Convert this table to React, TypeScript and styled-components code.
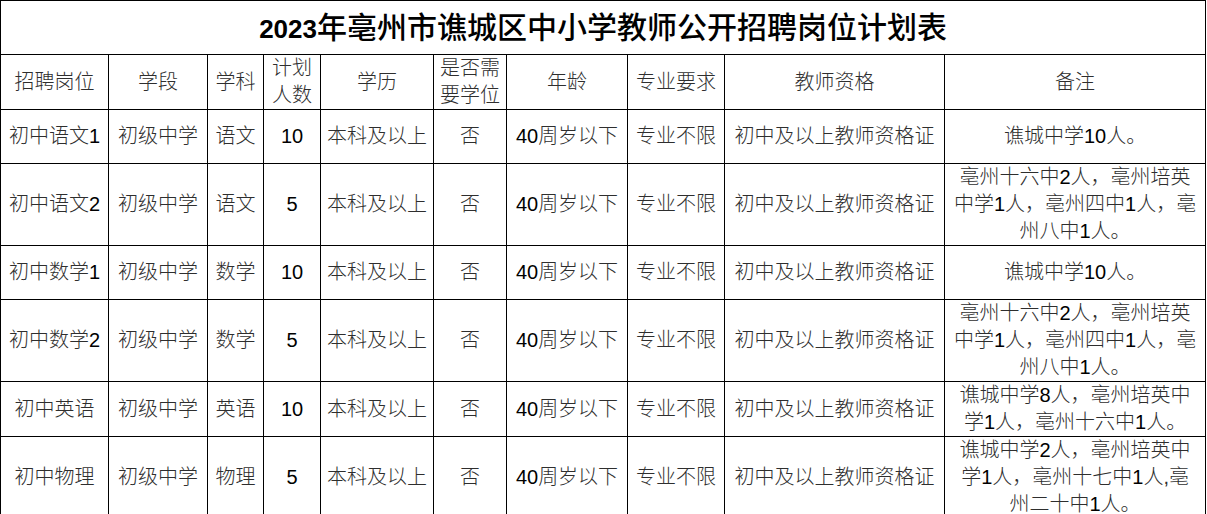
import React from "react";
import styled, { createGlobalStyle } from "styled-components";

const Global = createGlobalStyle`
  html, body { margin: 0; padding: 0; background: #fff; }
  body { font-family: "Noto Sans CJK SC", "Liberation Sans", sans-serif; }
`;

const Table = styled.table`
  border-collapse: collapse;
  table-layout: fixed;
  width: 1206px;
  color: #2e2e2e;
  font-family: "Liberation Sans", "Noto Sans CJK SC", sans-serif;
  font-weight: 300;
  font-size: 20px;
  line-height: 27px;
`;

const Row = styled.tr<{ $h: number }>`
  height: ${(p) => p.$h}px;
`;

const Cell = styled.td`
  border: 1px solid #000;
  padding: 0;
  text-align: center;
  vertical-align: middle;
  white-space: nowrap;
  overflow: hidden;
`;

const TitleCell = styled(Cell)`
  font-size: 30px;
  font-weight: 500;
  color: #000;
  line-height: 36px;
  padding-top: 2px;
`;

const TitleNum = styled.span`
  font-family: "Liberation Sans", sans-serif;
  font-weight: 700;
  font-size: 26px;
`;

const Num = styled.span`
  color: #000;
  font-weight: 400;
`;

const widths = [108, 99, 56, 57, 113, 73, 121, 97, 220, 261];

const headers: React.ReactNode[] = [
  "招聘岗位",
  "学段",
  "学科",
  <>计划<br />人数</>,
  "学历",
  <>是否需<br />要学位</>,
  "年龄",
  "专业要求",
  "教师资格",
  "备注",
];

type RowData = {
  pos: string;
  subj: string;
  count: string;
  notes: string[];
  h: number;
};

const rows: RowData[] = [
  { pos: "初中语文1", subj: "语文", count: "10", notes: ["谯城中学10人。"], h: 54 },
  {
    pos: "初中语文2",
    subj: "语文",
    count: "5",
    notes: ["亳州十六中2人，亳州培英", "中学1人，亳州四中1人，亳", "州八中1人。"],
    h: 81,
  },
  { pos: "初中数学1", subj: "数学", count: "10", notes: ["谯城中学10人。"], h: 54 },
  {
    pos: "初中数学2",
    subj: "数学",
    count: "5",
    notes: ["亳州十六中2人，亳州培英", "中学1人，亳州四中1人，亳", "州八中1人。"],
    h: 81,
  },
  {
    pos: "初中英语",
    subj: "英语",
    count: "10",
    notes: ["谯城中学8人，亳州培英中", "学1人，亳州十六中1人。"],
    h: 54,
  },
  {
    pos: "初中物理",
    subj: "物理",
    count: "5",
    notes: ["谯城中学2人，亳州培英中", "学1人，亳州十七中1人,亳", "州二十中1人。"],
    h: 81,
  },
];

const withNums = (s: string) =>
  s.split(/(\d+)/).map((part, i) =>
    /^\d+$/.test(part) ? <Num key={i}>{part}</Num> : <React.Fragment key={i}>{part}</React.Fragment>
  );

export default function App() {
  return (
    <>
      <Global />
      <Table>
        <colgroup>
          {widths.map((w, i) => (
            <col key={i} style={{ width: w }} />
          ))}
        </colgroup>
        <tbody>
          <Row $h={54}>
            <TitleCell colSpan={10}>
              <TitleNum>2023</TitleNum>年亳州市谯城区中小学教师公开招聘岗位计划表
            </TitleCell>
          </Row>
          <Row $h={54}>
            {headers.map((h, i) => (
              <Cell key={i}>{h}</Cell>
            ))}
          </Row>
          {rows.map((r, i) => (
            <Row $h={r.h} key={i}>
              <Cell>{withNums(r.pos)}</Cell>
              <Cell>初级中学</Cell>
              <Cell>{r.subj}</Cell>
              <Cell>
                <Num>{r.count}</Num>
              </Cell>
              <Cell>本科及以上</Cell>
              <Cell>否</Cell>
              <Cell>{withNums("40周岁以下")}</Cell>
              <Cell>专业不限</Cell>
              <Cell>初中及以上教师资格证</Cell>
              <Cell>
                {r.notes.map((n, j) => (
                  <React.Fragment key={j}>
                    {j > 0 && <br />}
                    {withNums(n)}
                  </React.Fragment>
                ))}
              </Cell>
            </Row>
          ))}
        </tbody>
      </Table>
    </>
  );
}
